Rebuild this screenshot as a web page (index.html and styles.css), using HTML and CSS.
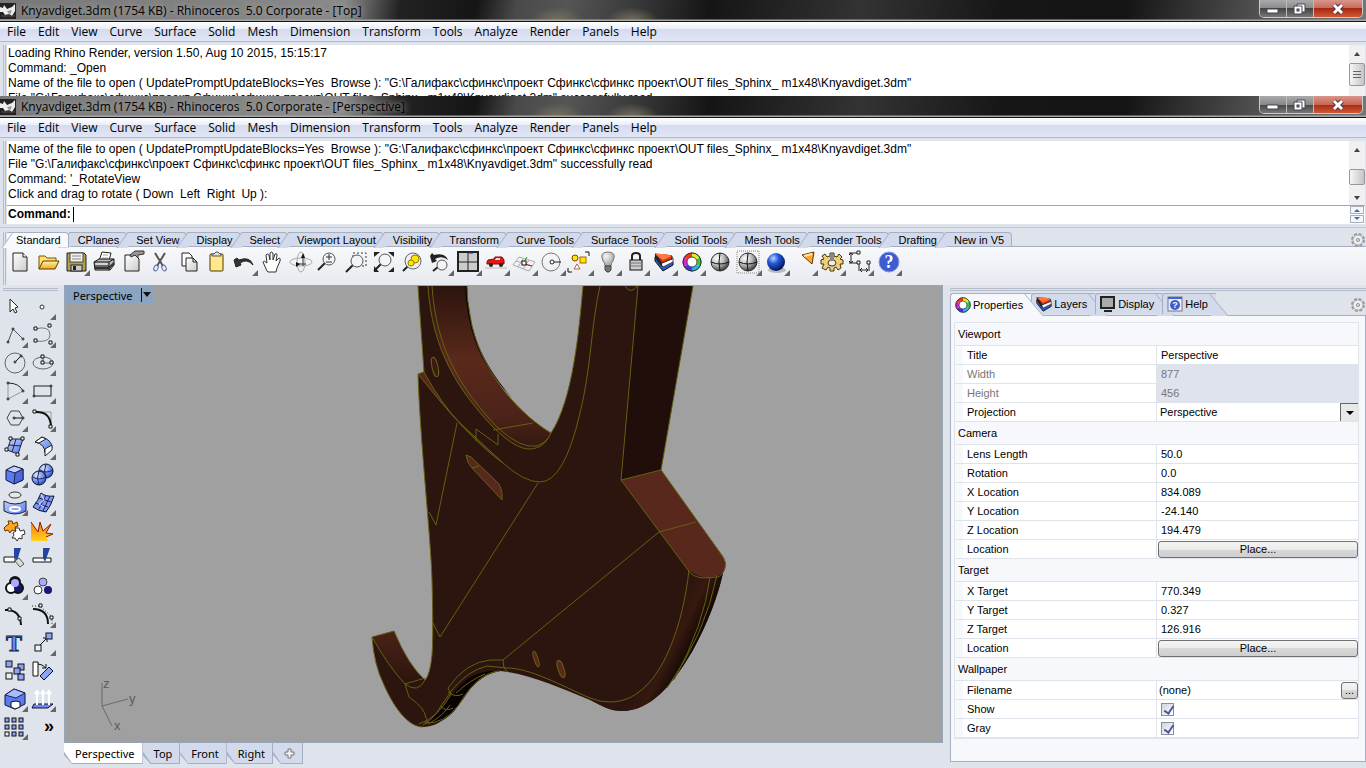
FILE: index.html
```
<!DOCTYPE html>
<html lang="en">
<head>
    <meta charset="utf-8">
    <title>Knyavdiget.3dm - Rhinoceros</title>
    <meta name="viewport" content="width=device-width, initial-scale=1.0">
    <link rel="stylesheet" href="styles.css">
</head>
<body>
    <!-- shared gradients and symbols -->
    <svg class="defs" width="0" height="0">
        <defs>
            <linearGradient id="paper" x1="0" y1="0" x2="1" y2="1"><stop offset="0" stop-color="#fff"/><stop offset="1" stop-color="#ccc"/></linearGradient>
            <linearGradient id="gold" x1="0" y1="0" x2="0" y2="1"><stop offset="0" stop-color="#fff3a8"/><stop offset="1" stop-color="#f0a820"/></linearGradient>
            <linearGradient id="blue" x1="0" y1="0" x2="1" y2="1"><stop offset="0" stop-color="#c4d4ff"/><stop offset="1" stop-color="#5578ee"/></linearGradient>
            <linearGradient id="fire" x1="0" y1="0" x2="0" y2="1"><stop offset="0" stop-color="#ff7a10"/><stop offset="1" stop-color="#ffd020"/></linearGradient>
            <radialGradient id="grayBall" cx=".35" cy=".3" r=".75"><stop offset="0" stop-color="#fff"/><stop offset=".5" stop-color="#bbb"/><stop offset="1" stop-color="#333"/></radialGradient>
            <radialGradient id="bulb" cx=".35" cy=".3" r=".8"><stop offset="0" stop-color="#f4f4f4"/><stop offset="1" stop-color="#999"/></radialGradient>
            <radialGradient id="blueBall" cx=".35" cy=".3" r=".75"><stop offset="0" stop-color="#b8d4ff"/><stop offset=".4" stop-color="#2458d8"/><stop offset="1" stop-color="#001050"/></radialGradient>
            <radialGradient id="softBall" cx=".35" cy=".3" r=".75"><stop offset="0" stop-color="#e4ecff"/><stop offset=".6" stop-color="#6a8cf4"/><stop offset="1" stop-color="#2848b8"/></radialGradient>
            <symbol id="wheel" viewBox="0 0 20 20">
                <circle cx="10" cy="10" r="9" fill="#fff" stroke="#333"/>
                <g fill="none" stroke-width="4">
                    <path d="M10 3A7 7 0 0 1 16 6.500" stroke="#e0f020"/>
                    <path d="M16 6.500A7 7 0 0 1 16 13.500" stroke="#30d030"/>
                    <path d="M16 13.500A7 7 0 0 1 10 17" stroke="#20b8e8"/>
                    <path d="M10 17A7 7 0 0 1 4 13.500" stroke="#3838e8"/>
                    <path d="M4 13.500A7 7 0 0 1 4 6.500" stroke="#e020d0"/>
                    <path d="M4 6.500A7 7 0 0 1 10 3" stroke="#f03818"/>
                </g>
                <circle cx="10" cy="10" r="9" fill="none" stroke="#333"/>
                <circle cx="10" cy="10" r="5" fill="#fff" stroke="#444"/>
            </symbol>
            <symbol id="layers" viewBox="0 0 20 20">
                <path d="M1 5V9L9 19L19 13V10Z" fill="#2858c8" stroke="#111"/>
                <path d="M1 4L9 15L19 10V6L9 10Z" fill="#fff" stroke="#444"/>
                <path d="M1 2L8 11L18 7V4L12 3Z" fill="#e83010" stroke="#222"/>
                <path d="M1 2L12 2L18 4L9 8Z" fill="#ff7840"/>
                <path d="M1 2V6L8 15V11Z" fill="#222"/>
            </symbol>
            <symbol id="cog" viewBox="0 0 16 16">
                <circle cx="8" cy="8" r="6" fill="none" stroke="#999" stroke-width="2" stroke-dasharray="3 1.700"/>
                <circle cx="8" cy="8" r="5" fill="#eceef2" stroke="#aaa"/>
                <circle cx="8" cy="8" r="1.500" fill="none" stroke="#888"/>
            </symbol>
            <symbol id="rhino" viewBox="0 0 16 16">
                <rect width="16" height="16" fill="#222"/>
                <path d="M0 4L3 5L4 2L7 6L12 4L15 1V8L12 13L9 11L5 12L3 9H0Z" fill="#eee"/>
                <path d="M7 8L12 7L10 12Z" fill="#999"/>
                <path d="M1 13H15" stroke="#555"/>
            </symbol>
            <symbol id="mag" viewBox="0 0 28 28">
                <path d="M4 22L11 15" stroke="#222" stroke-width="2"/>
                <circle cx="15" cy="11" r="6" fill="#f4f4f6" stroke="#555"/>
            </symbol>
        </defs>
    </svg>

    <div class="window back-window">
        <div class="titlebar">
            <svg class="app-icon"><use href="#rhino"/></svg>
            <span class="title-text">Knyavdiget.3dm (1754 KB) - Rhinoceros  5.0 Corporate - [Top]</span>
            <div class="win-buttons">
                <button aria-label="Minimize"><svg width="14" height="12"><rect x="1" y="6" width="11" height="4" fill="#fff" stroke="#445"/></svg></button>
                <button aria-label="Restore"><svg width="14" height="12"><path d="M4 1H12V9H4Z" fill="#fff" stroke="#445"/><path d="M1 3H9V11H1Z" fill="#fff" stroke="#445"/><rect x="4" y="6" width="2" height="2" fill="#667" stroke="#445"/></svg></button>
                <button class="close" aria-label="Close"><svg width="14" height="12"><path d="M3 2L11 10M11 2L3 10" stroke="#534" stroke-width="5"/><path d="M3 2L11 10M11 2L3 10" stroke="#fff" stroke-width="3"/></svg></button>
            </div>
        </div>
        <nav class="menubar">
            <a href="#">File</a><a href="#">Edit</a><a href="#">View</a><a href="#">Curve</a><a href="#">Surface</a><a href="#">Solid</a><a href="#">Mesh</a><a href="#">Dimension</a><a href="#">Transform</a><a href="#">Tools</a><a href="#">Analyze</a><a href="#">Render</a><a href="#">Panels</a><a href="#">Help</a>
        </nav>
        <div class="console">
            <div class="grip"></div>
            <div class="console-text">
                <p>Loading Rhino Render, version 1.50, Aug 10 2015, 15:15:17</p>
                <p>Command: _Open</p>
                <p>Name of the file to open ( UpdatePromptUpdateBlocks=Yes  Browse ): "G:\Галифакс\сфинкс\проект Сфинкс\сфинкс проект\OUT files_Sphinx_ m1x48\Knyavdiget.3dm"</p>
                <p>File "G:\Галифакс\сфинкс\проект Сфинкс\сфинкс проект\OUT files_Sphinx_ m1x48\Knyavdiget.3dm" successfully read</p>
            </div>
            <div class="scrollbar">
                <svg width="16" height="18"><path d="M5 11L8 7L11 11Z" fill="#444"/></svg>
                <div class="thumb tall"><svg width="8" height="10"><path d="M0 1.500H8M0 4.500H8M0 7.500H8" stroke="#666"/></svg></div>
            </div>
        </div>
    </div>

    <div class="window main-window">
        <div class="titlebar">
            <svg class="app-icon"><use href="#rhino"/></svg>
            <span class="title-text">Knyavdiget.3dm (1754 KB) - Rhinoceros  5.0 Corporate - [Perspective]</span>
            <div class="win-buttons">
                <button aria-label="Minimize"><svg width="14" height="12"><rect x="1" y="6" width="11" height="4" fill="#fff" stroke="#445"/></svg></button>
                <button aria-label="Restore"><svg width="14" height="12"><path d="M4 1H12V9H4Z" fill="#fff" stroke="#445"/><path d="M1 3H9V11H1Z" fill="#fff" stroke="#445"/><rect x="4" y="6" width="2" height="2" fill="#667" stroke="#445"/></svg></button>
                <button class="close" aria-label="Close"><svg width="14" height="12"><path d="M3 2L11 10M11 2L3 10" stroke="#534" stroke-width="5"/><path d="M3 2L11 10M11 2L3 10" stroke="#fff" stroke-width="3"/></svg></button>
            </div>
        </div>
        <nav class="menubar">
            <a href="#">File</a><a href="#">Edit</a><a href="#">View</a><a href="#">Curve</a><a href="#">Surface</a><a href="#">Solid</a><a href="#">Mesh</a><a href="#">Dimension</a><a href="#">Transform</a><a href="#">Tools</a><a href="#">Analyze</a><a href="#">Render</a><a href="#">Panels</a><a href="#">Help</a>
        </nav>
        <div class="console">
            <div class="grip"></div>
            <div class="console-main">
                <div class="console-history">
                    <div class="console-text">
                        <p>Name of the file to open ( UpdatePromptUpdateBlocks=Yes  Browse ): "G:\Галифакс\сфинкс\проект Сфинкс\сфинкс проект\OUT files_Sphinx_ m1x48\Knyavdiget.3dm"</p>
                        <p>File "G:\Галифакс\сфинкс\проект Сфинкс\сфинкс проект\OUT files_Sphinx_ m1x48\Knyavdiget.3dm" successfully read</p>
                        <p>Command: '_RotateView</p>
                        <p>Click and drag to rotate ( Down  Left  Right  Up ):</p>
                    </div>
                    <div class="scrollbar">
                        <svg width="16" height="18"><path d="M5 11L8 7L11 11Z" fill="#444"/></svg>
                        <span class="track"></span>
                        <div class="thumb"></div>
                        <svg width="16" height="20"><path d="M5 11L8 15L11 11Z" fill="#444"/></svg>
                    </div>
                </div>
                <div class="command-line">
                    <label for="command">Command:</label>
                    <span class="caret"></span>
                    <input id="command" type="text">
                    <div class="spin">
                        <button aria-label="Previous"><svg width="8" height="4"><path d="M1 4L4 1L7 4Z" fill="#46b"/></svg></button>
                        <button aria-label="Next"><svg width="8" height="4"><path d="M1 0L4 3L7 0Z" fill="#46b"/></svg></button>
                    </div>
                </div>
            </div>
        </div>

        <div class="toolbar">
            <div class="grip"></div>
            <div class="toolbar-main">
                <div class="tabs">
                    <button class="tab active">Standard</button><button class="tab">CPlanes</button><button class="tab">Set View</button><button class="tab">Display</button><button class="tab">Select</button><button class="tab">Viewport Layout</button><button class="tab">Visibility</button><button class="tab">Transform</button><button class="tab">Curve Tools</button><button class="tab">Surface Tools</button><button class="tab">Solid Tools</button><button class="tab">Mesh Tools</button><button class="tab">Render Tools</button><button class="tab">Drafting</button><button class="tab">New in V5</button>
                    <svg class="cog"><use href="#cog"/></svg>
                </div>
                <div class="icons">
                    <button class="tool" aria-label="New"><svg><path d="M7 5H17L21 9V23H7Z" fill="url(#paper)" stroke="#222"/><path d="M17 5V9H21" fill="#fff" stroke="#222"/></svg></button>
                    <button class="tool" aria-label="Open"><svg><path d="M5 21V8H11L13 10H22V13" fill="#ffe070" stroke="#7a5200"/><path d="M5 21L9 13H25L21 21Z" fill="url(#gold)" stroke="#5a3c00"/></svg></button>
                    <button class="tool fly" aria-label="Save"><svg><path d="M5 5H22L24 7V23H5Z" fill="#b0a050" stroke="#222"/><rect x="8" y="5" width="13" height="9" fill="#f2f2f2" stroke="#444"/><path d="M10 8H19M10 11H19" stroke="#888"/><rect x="9" y="17" width="11" height="6" fill="#ccc" stroke="#222"/><rect x="11" y="18" width="3" height="4" fill="#222"/></svg></button>
                    <button class="tool" aria-label="Print"><svg><path d="M9 13L12 4L21 5L19 13" fill="#fff" stroke="#222"/><path d="M13 7H18M12 10H18" stroke="#aaa"/><path d="M4 14L9 11H24V17L20 22H5Z" fill="#bbb" stroke="#111"/><path d="M4 14H19V22M19 14L24 11M5 18H19" fill="none" stroke="#111"/><path d="M5 20H19L24 15" fill="none" stroke="#333" stroke-width="2"/><path d="M6 16H17" stroke="#eee"/></svg></button>
                    <button class="tool" aria-label="Document properties"><svg><path d="M7 7H17L21 11V23H7Z" fill="url(#paper)" stroke="#222"/><path d="M12 7L17 3H26V6L20 7V10L17 7L13 9Z" fill="#999" stroke="#333"/></svg></button>
                    <button class="tool" aria-label="Cut"><svg><path d="M9 5L17 18M19 5L11 18" stroke="#555" stroke-width="2"/><ellipse cx="10" cy="20" rx="2" ry="3" fill="none" stroke="#5868a8" transform="rotate(25 10 20)"/><ellipse cx="18" cy="20" rx="2" ry="3" fill="none" stroke="#5868a8" transform="rotate(-25 18 20)"/></svg></button>
                    <button class="tool" aria-label="Copy"><svg><path d="M8 5H15L18 8V18H8Z" fill="#fff" stroke="#222"/><path d="M12 10H19L23 14V23H12Z" fill="url(#paper)" stroke="#222"/><path d="M19 10V14H23" fill="none" stroke="#222"/></svg></button>
                    <button class="tool" aria-label="Paste"><svg><rect x="8" y="6" width="13" height="17" rx="1" fill="#ffe88a" stroke="#4a3a00"/><path d="M10 8V6H12L14 4H16L18 6H19V8Z" fill="#ddd" stroke="#555"/></svg></button>
                    <button class="tool fly" aria-label="Undo"><svg><path d="M4 12L6 19L11 17L10 15Q17 10 23 17Q20 8 9 12L7 10Z" fill="#333" stroke="#222"/></svg></button>
                    <button class="tool" aria-label="Pan"><svg><path d="M9 23L5 14Q6 12 9 15L8 7Q9 5 11 7L12 12L12 5Q13 3 15 5V12L17 6Q19 5 19 7L18 13L21 10Q23 10 22 13L19 20L18 24H10Z" fill="#fff" stroke="#333"/></svg></button>
                    <button class="tool" aria-label="Rotate view"><svg fill="none"><ellipse cx="15" cy="14" rx="11" ry="4" stroke="#aaa"/><ellipse cx="15" cy="14" rx="4" ry="10" stroke="#aaa"/><path d="M17 8V18M11 16H20" stroke="#333"/><path d="M15 10L17 5L19 10ZM10 14L14 16L10 19Z" fill="#111"/></svg></button>
                    <button class="tool" aria-label="Zoom dynamic"><svg><use href="#mag"/><path d="M12 9H18M15 6V12M12 14H18" stroke="#333"/></svg></button>
                    <button class="tool" aria-label="Zoom window"><svg><rect x="11" y="5" width="13" height="13" fill="none" stroke="#333" stroke-dasharray="2 2"/><use href="#mag" y="2"/></svg></button>
                    <button class="tool" aria-label="Zoom extents"><svg><use href="#mag" y="1"/><path d="M4 4H10L4 9ZM24 4V9L18 4ZM4 24V18L9 24ZM24 24H18L24 19Z" fill="#222"/></svg></button>
                    <button class="tool" aria-label="Zoom selected"><svg><path d="M5 23L10 18" stroke="#222" stroke-width="2"/><circle cx="15" cy="13" r="8" fill="#eee" stroke="#666"/><circle cx="17" cy="11" r="4" fill="#ffe800" stroke="#997700"/><circle cx="13" cy="15" r="3" fill="#ffe800" stroke="#997700"/></svg></button>
                    <button class="tool fly" aria-label="Undo view"><svg><path d="M7 23L12 19" stroke="#222" stroke-width="2"/><circle cx="16" cy="17" r="5" fill="#f4f4f6" stroke="#555"/><path d="M4 8L6 15L11 13L9 11Q16 7 22 12Q19 4 8 7L6 5Z" fill="#222"/></svg></button>
                    <button class="tool fly" aria-label="Four views"><svg><path d="M4 4H24V23H4Z" fill="#ccc" stroke="#222" stroke-width="2"/><path d="M14 4V23M4 14H24" stroke="#222"/><path d="M15 5H19" stroke="#23a"/></svg></button>
                    <button class="tool fly" aria-label="Right view"><svg><path d="M5 14L6 12L12 11L13 9H20L22 12V16H5Z" fill="#e01818" stroke="#900"/><path d="M14 10H18V12H13Z" fill="#ddd"/><circle cx="9" cy="17" r="2" fill="#222"/><circle cx="19" cy="17" r="2" fill="#222"/><path d="M3 20H25" stroke="#bbb"/></svg></button>
                    <button class="tool fly" aria-label="Set CPlane"><svg fill="none"><path d="M9 9L25 14L19 23L3 17ZM6 13L22 18M13 11L8 19M19 12L13 21" stroke="#aaa"/><path d="M14 14L17 9" stroke="#0a0"/><path d="M14 16L22 18" stroke="#c00"/><rect x="12" y="13" width="4" height="4" fill="#fff" stroke="#111"/></svg></button>
                    <button class="tool fly" aria-label="Object snap"><svg><circle cx="13" cy="14" r="9" fill="none" stroke="#777"/><path d="M15 14H23" stroke="#222"/><circle cx="14" cy="14" r="2" fill="#fff" stroke="#222"/></svg></button>
                    <button class="tool fly" aria-label="Select"><svg><path d="M19 4H23V8M2 20V24H6" fill="none" stroke="#111"/><circle cx="9" cy="10" r="3" fill="#ffe800" stroke="#840"/><rect x="14" y="9" width="6" height="6" fill="#ffe800" stroke="#a60"/><path d="M8 21L11 16L14 21Z" fill="#fff" stroke="#a64"/></svg></button>
                    <button class="tool fly" aria-label="Hide"><svg><path d="M11 18Q11 15 9 13Q5 4 14 4Q23 4 19 13Q17 15 17 18Z" fill="url(#bulb)" stroke="#777"/><path d="M11 18H17V22L15 24H13L11 22Z" fill="#777" stroke="#444"/></svg></button>
                    <button class="tool fly" aria-label="Lock"><svg><path d="M10 13V8Q10 5 14 5Q18 5 18 8V13" fill="none" stroke="#222" stroke-width="2"/><rect x="8" y="12" width="12" height="10" fill="#ccc" stroke="#111"/><path d="M9 15H19M9 18H19" stroke="#777"/></svg></button>
                    <button class="tool fly" aria-label="Layers"><svg><use href="#layers" x="4" y="4" width="20" height="20"/></svg></button>
                    <button class="tool fly" aria-label="Object properties"><svg><use href="#wheel" x="4" y="4" width="20" height="20"/></svg></button>
                    <button class="tool" aria-label="Shade"><svg><circle cx="14" cy="14" r="9" fill="url(#grayBall)" stroke="#333"/><path d="M5 14Q14 18 23 14M14 5Q12 14 14 23" fill="none" stroke="#111"/></svg></button>
                    <button class="tool fly" aria-label="Shade all"><svg><rect x="3" y="3" width="22" height="22" fill="none" stroke="#bbb" stroke-width="2" stroke-dasharray="1 1"/><circle cx="14" cy="14" r="9" fill="url(#grayBall)" stroke="#333"/><path d="M5 14Q14 18 23 14M14 5Q12 14 14 23" fill="none" stroke="#111"/></svg></button>
                    <button class="tool fly" aria-label="Render"><svg><ellipse cx="15" cy="22" rx="9" ry="3" fill="#bbb"/><circle cx="14" cy="14" r="9" fill="url(#blueBall)"/></svg></button>
                    <button class="tool fly" aria-label="Spotlight"><svg><path d="M12 7L24 4L22 16Z" fill="#ffa830" stroke="#630"/><path d="M14 8L22 6" stroke="#ffe8a0" stroke-width="2"/></svg></button>
                    <button class="tool fly" aria-label="Options"><svg><path d="M12 5H16V8L19 9L21 6L24 9L22 11L25 12V16L22 16L23 20L20 22L18 19L16 20V23H12V20L10 19L8 22L4 20L6 16L3 16V12L6 11L4 8L7 6L9 9L12 8Z" fill="#ecd080" stroke="#4a3400"/><ellipse cx="14" cy="15" rx="4" ry="3" fill="#eee" stroke="#4a3400"/><rect x="12" y="6" width="4" height="7" fill="#888"/></svg></button>
                    <button class="tool fly" aria-label="Dimensions"><svg fill="none" stroke="#222"><path d="M5 5V15M3 5H12M3 15H12M13 16V23M23 16V23M14 22H22M3 7L5 5L7 7M3 13L5 15L7 13M16 20L14 22L16 24M20 20L22 22L20 24"/><path d="M11 3H14V6H11ZM11 13H14V16H11ZM21 13H24V16H21Z" fill="#fff"/></svg></button>
                    <button class="tool fly" aria-label="Help"><svg><circle cx="15" cy="14" r="10" fill="#3c5cd0" stroke="#8898e0"/><text x="15" y="20" class="help-mark">?</text></svg></button>
                </div>
            </div>
        </div>

        <div class="workspace">
            <div class="side-tools">
                <div class="h-grip"></div>
                <div class="tool-grid">
                    <button class="tool" aria-label="Pointer"><svg><path d="M10 7V20L13 17L15 21L17 20L15 16L18 15Z" fill="#fff" stroke="#222"/></svg></button>
                    <button class="tool fly" aria-label="Point"><svg><circle cx="14" cy="15" r="2" fill="#fff" stroke="#333"/></svg></button>
                    <button class="tool fly" aria-label="Polyline"><svg><path d="M8 22L13 9L23 19" fill="none" stroke="#555"/><g fill="#fff" stroke="#111"><circle cx="8" cy="22" r="1"/><circle cx="13" cy="9" r="1"/><circle cx="23" cy="19" r="1"/></g></svg></button>
                    <button class="tool fly" aria-label="Curve"><svg><path d="M7 9Q22 5 22 15Q22 23 7 21" fill="none" stroke="#777"/><path d="M6 7H9V10H6ZM20 4H23V7H20ZM6 19H9V22H6ZM21 21H24V24H21Z" fill="#fff" stroke="#111"/></svg></button>
                    <button class="tool fly" aria-label="Circle"><svg><circle cx="15" cy="15" r="10" fill="none" stroke="#666"/><path d="M15 14L21 8" stroke="#111"/><g fill="#fff" stroke="#111"><circle cx="15" cy="14" r="1"/><circle cx="21" cy="8" r="1"/></g></svg></button>
                    <button class="tool fly" aria-label="Ellipse"><svg><ellipse cx="15" cy="15" rx="10" ry="6" fill="none" stroke="#666"/><path d="M15 15V9M15 15H24" stroke="#666"/><path d="M13 7H16V10H13ZM13 13H16V16H13ZM22 13H25V16H22Z" fill="#fff" stroke="#111"/></svg></button>
                    <button class="tool fly" aria-label="Arc"><svg><path d="M8 7V23L23 15" fill="none" stroke="#999"/><path d="M8 7Q19 7 23 15" fill="none" stroke="#222"/><g fill="#fff" stroke="#111"><circle cx="8" cy="7" r="1"/><circle cx="8" cy="23" r="1"/><circle cx="23" cy="15" r="1"/></g></svg></button>
                    <button class="tool fly" aria-label="Rectangle"><svg><rect x="6" y="10" width="17" height="10" fill="none" stroke="#222"/><circle cx="6" cy="20" r="1" fill="#fff" stroke="#111"/><circle cx="23" cy="10" r="1" fill="#fff" stroke="#111"/></svg></button>
                    <button class="tool fly" aria-label="Polygon"><svg><path d="M7 14L11 7H19L23 14L19 21H11Z" fill="none" stroke="#444"/><path d="M14 14H22" stroke="#111"/><circle cx="14" cy="14" r="1" fill="#fff" stroke="#111"/><circle cx="23" cy="14" r="1" fill="#fff" stroke="#111"/></svg></button>
                    <button class="tool fly" aria-label="Fillet"><svg><path d="M9 8H23V20" fill="none" stroke="#999"/><path d="M7 8Q22 7 23 22" fill="none" stroke="#111" stroke-width="2"/><path d="M5 6H8V9H5ZM21 21H24V24H21Z" fill="#fff" stroke="#111"/></svg></button>
                    <button class="tool fly" aria-label="Surface"><svg><path d="M11 7H23L18 22L7 18Z" fill="url(#blue)" stroke="#223"/><path d="M16 7L12 20M9 13L21 14" stroke="#223"/><path d="M9 5H12V8H9ZM21 5H24V8H21ZM5 16H8V19H5ZM16 21H19V24H16Z" fill="#fff" stroke="#111"/></svg></button>
                    <button class="tool fly" aria-label="Sweep"><svg><path d="M7 10L14 5Q24 8 24 16L17 21Q17 12 7 10Z" fill="url(#blue)" stroke="#222"/><path d="M7 10L14 5L18 7L11 11ZM17 17L24 13V18L17 24Z" fill="#fff" stroke="#222"/></svg></button>
                    <button class="tool fly" aria-label="Box"><svg><path d="M6 10L14 6L23 9V20L14 24L6 20Z" fill="#5a7cf2" stroke="#113"/><path d="M6 10L14 6L23 9L15 13Z" fill="#c0d0ff" stroke="#225"/><path d="M15 13L23 9V20L14 24Z" fill="#4a68d8" stroke="#225"/></svg></button>
                    <button class="tool fly" aria-label="Boolean"><svg><g fill="url(#softBall)" stroke="#113"><circle cx="18" cy="11" r="7"/><circle cx="11" cy="18" r="7"/></g><path d="M12 10Q18 14 25 10M5 17Q11 21 18 17M18 4Q15 11 18 18M11 11Q8 18 11 25" fill="none" stroke="#224"/></svg></button>
                    <button class="tool fly" aria-label="Split"><svg><ellipse cx="15" cy="7" rx="6" ry="3" fill="#e8e8e8" stroke="#333"/><path d="M4 13Q15 19 26 13V23Q15 29 4 23Z" fill="url(#blue)" stroke="#223"/><ellipse cx="15" cy="21" rx="5" ry="2" fill="none" stroke="#fff" stroke-width="2"/></svg></button>
                    <button class="tool fly" aria-label="Patch"><svg><path d="M13 5Q18 9 26 8Q23 18 18 24Q10 23 5 19Q10 13 13 5Z" fill="#7c98f4" stroke="#113"/><path d="M11 10L23 14M7 15L20 19M18 7L11 21M22 8L15 23" stroke="#225"/><path d="M13 6L16 12L11 16L16 19" fill="none" stroke="#dfe8ff"/></svg></button>
                    <button class="tool" aria-label="Explode"><svg><path d="M6 10L9 8L8 5L12 5L13 8L17 6L18 10L15 11L16 15L12 14L10 17L8 14L5 15L4 12Z" fill="#ffa820" stroke="#643800"/><path d="M13 17L16 15L15 12L19 12L20 15L24 14L25 18L22 19L22 23L19 22L17 25L15 22L12 22L14 19Z" fill="#fff" stroke="#333"/></svg></button>
                    <button class="tool" aria-label="Burst"><svg><path d="M3 25V6L10 16L12 6L15 15L23 8L18 17L25 18L18 21L20 25Z" fill="url(#fire)"/><path d="M3 6L10 16L12 6L15 15L23 8L18 17L25 18L18 21" fill="none" stroke="#842000"/></svg></button>
                    <button class="tool" aria-label="Trim"><svg><path d="M4 13H15V18H4Z" fill="#fff" stroke="#111"/><path d="M14 4H21L17 17L14 13Z" fill="#2545a0"/><path d="M15 17L19 14L24 20L20 23Z" fill="#ddd" stroke="#555"/></svg></button>
                    <button class="tool" aria-label="Split line"><svg><path d="M5 14H23V18H5Z" fill="#fff" stroke="#111"/><path d="M15 4H22L17 18L15 14Z" fill="#2545a0"/></svg></button>
                    <button class="tool fly" aria-label="Group"><svg><g stroke="#111" stroke-width="4"><circle cx="15" cy="10" r="4"/><circle cx="11" cy="16" r="4"/><circle cx="18" cy="16" r="4"/></g><circle cx="11" cy="16" r="4" fill="#fff"/><circle cx="18" cy="16" r="4" fill="#181868"/><circle cx="15" cy="11" r="4" fill="#aaaaff"/></svg></button>
                    <button class="tool" aria-label="Ungroup"><svg><circle cx="15" cy="10" r="4" fill="#aaaaff" stroke="#444"/><circle cx="10" cy="18" r="4" fill="#fff" stroke="#333"/><circle cx="20" cy="18" r="4" fill="#181878"/></svg></button>
                    <button class="tool" aria-label="Edit points"><svg><path d="M5 10Q20 9 21 25" fill="none" stroke="#111" stroke-width="2"/><path d="M8 8H11V11H8ZM18 17H21V20H18Z" fill="#fff" stroke="#111"/></svg></button>
                    <button class="tool fly" aria-label="Control points"><svg><path d="M5 9Q20 9 20 24" fill="none" stroke="#111" stroke-width="2"/><path d="M4 6H12L24 17V25" fill="none" stroke="#222" stroke-dasharray="1 2"/><path d="M11 4H14V7H11ZM22 16H25V19H22Z" fill="#fff" stroke="#111"/></svg></button>
                    <button class="tool" aria-label="Text"><svg><text x="14" y="23" class="text-mark">T</text></svg></button>
                    <button class="tool fly" aria-label="Move"><svg><path d="M12 17L19 10M15 10H19V14" fill="none" stroke="#111"/><rect x="18" y="5" width="6" height="6" fill="#8ca4f8" stroke="#111"/><rect x="7" y="17" width="6" height="6" fill="#eee" stroke="#111"/></svg></button>
                    <button class="tool" aria-label="Copy objects"><svg><g fill="#8ca4f8" stroke="#111"><rect x="6" y="5" width="6" height="6"/><rect x="18" y="8" width="6" height="6"/><rect x="14" y="12" width="6" height="6"/><rect x="18" y="18" width="6" height="6"/><rect x="6" y="17" width="6" height="6" fill="#eee"/></g></svg></button>
                    <button class="tool" aria-label="Rotate"><svg><path d="M5 6H10V20H5Z" fill="#fff" stroke="#111"/><path d="M10 8Q14 8 18 12M14 12H18V8" fill="none" stroke="#111"/><path d="M12 20L21 11L25 15L16 24Z" fill="#8ca4f8" stroke="#111"/></svg></button>
                    <button class="tool fly" aria-label="Solid edit"><svg><path d="M5 11L14 5L25 9V20L15 25L5 21Z" fill="#5a7cf2" stroke="#113"/><path d="M5 11L14 5L25 9L16 14Z" fill="#a8bcfc" stroke="#225"/><path d="M11 18L16 17L20 18V23L15 25L11 23Z" fill="#fff" stroke="#111"/></svg></button>
                    <button class="tool fly" aria-label="Extrude"><svg><path d="M6 20H25L20 24H4Z" fill="#6c8cf4" stroke="#113"/><path d="M9 21V7M15 21V7M21 21V7M7 10L9 7L11 10M13 10L15 7L17 10M19 10L21 7L23 10" fill="none" stroke="#fff" stroke-width="2"/></svg></button>
                    <button class="tool fly" aria-label="Array"><svg><g fill="#8ca4f8" stroke="#111"><rect x="5" y="6" width="4" height="4"/><rect x="12" y="6" width="4" height="4"/><rect x="19" y="6" width="4" height="4"/><rect x="5" y="13" width="4" height="4"/><rect x="12" y="13" width="4" height="4"/><rect x="19" y="13" width="4" height="4"/><rect x="5" y="20" width="4" height="4" fill="#eee"/><rect x="12" y="20" width="4" height="4"/><rect x="19" y="20" width="4" height="4"/></g></svg></button>
                    <button class="tool more" aria-label="More tools">»</button>
                </div>
            </div>

            <div class="view-column">
                <div class="viewport">
                    <svg class="scene" viewBox="65 286 877 456" preserveAspectRatio="xMinYMin meet">
                        <defs>
                            <linearGradient id="ring" x1="0" y1="0" x2="0" y2="1"><stop offset="0" stop-color="#2c140e"/><stop offset=".45" stop-color="#5a291b"/><stop offset=".8" stop-color="#4c2318"/><stop offset="1" stop-color="#32170f"/></linearGradient>
                            <linearGradient id="hook" x1="0" y1="0" x2="0" y2="1"><stop offset="0" stop-color="#4a2217"/><stop offset="1" stop-color="#2b150e"/></linearGradient>
                            <linearGradient id="rim" gradientUnits="userSpaceOnUse" x1="668" y1="622" x2="704" y2="640"><stop offset="0" stop-color="#2b150e"/><stop offset=".4" stop-color="#36190f"/><stop offset="1" stop-color="#050201"/></linearGradient>
                        </defs>
                        <path class="body" d="M418 286L424 372L418 374C420 440 431 540 432 580C433 620 433 640 432 655Q430 675 425 680Q408 665 394 631L372 637Q374 665 384 685C396 712 410 727 423 727C440 727 455 712 466 695C478 678 488 671 500 671C530 674 560 688 590 700C605 708 612 711 622 711C650 711 672 686 693 650C708 622 718 596 723 573L725 565Q726 560 722 555L661 470L693 286H583C579 330 573 400 551 433C520 415 478 370 470 315Q467 300 467 286Z"/>
                        <path d="M428 286C432 350 458 390 493 427Q520 454 536 448Q546 445 551 433C520 415 478 370 470 315Q467 300 467 286Z" fill="url(#ring)"/>
                        <path d="M467 286Q467 300 470 315C476 350 492 374 512 398C484 368 468 340 465 286Z" fill="#0d0604"/>
                        <path class="side" d="M638 286H693L661 470L621 480Z"/>
                        <path class="light" d="M621 480L661 470L723 557Q727 563 725 568Q723 575 718 577L703 578Q692 577 688 570Z"/>
                        <path d="M689 570C683 625 660 702 610 702Q600 702 590 698Q606 711 622 711C650 711 672 686 693 650C708 622 718 596 723 573Q705 583 689 570Z" fill="url(#rim)"/>
                        <path class="light" d="M418 374L424 372Q442 405 460 423L503 463Q470 440 418 374Z"/>
                        <path d="M372 637L394 631Q408 665 425 680L405 684Q388 666 372 637Z" fill="url(#hook)"/>
                        <path class="light" d="M466 455L471 457L498 483Q503 489 502 500L472 468Q467 463 466 455Z"/>
                        <path d="M490 671C465 674 458 688 441 709Q433 719 426 723Q446 724 458 706Q476 675 500 671Z" fill="#080302"/>
                        <g class="edge">
                            <path d="M418 286L424 372L418 374C420 440 431 540 432 580C433 620 433 640 432 655Q430 675 425 680Q408 665 394 631L372 637Q374 665 384 685C396 712 410 727 423 727M425 723Q444 724 458 706Q478 672 500 671M467 286Q467 300 470 315C478 370 520 415 551 433C573 400 579 330 583 286M693 286L661 470L723 557Q727 563 725 568Q723 575 718 577L703 578Q692 577 688 570L621 480L638 286M621 480L661 470"/>
                            <path d="M428 286C432 350 458 390 493 427Q520 454 536 448Q546 445 551 433M432 286C436 350 462 390 497 427Q521 449 536 446Q544 444 549 437"/>
                            <path d="M600 286C591 325 591 370 580 413Q564 482 540 482Q524 482 503 463L460 423Q442 405 424 372M418 374Q470 440 503 463M493 430L533 423"/>
                            <path d="M476 441V429L498 445V434M457 423L436 525L429 512M538 483L440 637L433 623M659 532L696 522M659 532L503 660L504 668L508 672"/>
                            <path d="M689 570C683 625 660 702 610 702Q600 702 590 698C560 685 530 668 507 668L487 666Q467 671 452 690L441 706Q433 720 423 725M503 660H490Q466 662 448 688L451 694Q438 718 419 724M710 577Q704 625 674 680M717 575Q705 635 667 688"/>
                            <path d="M448 692Q455 698 463 694M440 706Q446 712 453 708M425 723L427 720M456 693Q470 680 485 674M372 637Q388 666 405 684L425 678M405 684Q418 694 425 680M405 684L409 697Q425 708 426 718L429 723M428 724Q443 716 450 705"/>
                            <ellipse cx="435" cy="367" rx="3" ry="10" transform="rotate(-12 435 367)" fill="#3b1b12"/>
                            <ellipse cx="536" cy="659" rx="2" ry="8" transform="rotate(-18 536 659)" fill="#57281b"/>
                            <ellipse cx="561" cy="669" rx="3" ry="9" transform="rotate(-18 561 669)" fill="#57281b"/>
                            <path d="M466 455L471 457L498 483Q503 489 502 500L472 468Q467 463 466 455M472 468L479 466M625 286Q631 295 637 286"/>
                        </g>
                        <g class="axes">
                            <path d="M102 683V706L128 699M102 706L112 726"/>
                            <text x="103" y="688">z</text><text x="129" y="703">y</text><text x="114" y="730">x</text>
                        </g>
                    </svg>
                    <button class="view-label"><span>Perspective</span><svg width="10" height="16"><path d="M.5 1V15" stroke="#111"/><path d="M2 5H10L6 10Z" fill="#111"/></svg></button>
                </div>
                <div class="view-tabs">
                    <button class="active">Perspective</button><button>Top</button><button>Front</button><button>Right</button><button aria-label="Add viewport"><svg width="11" height="11"><path d="M4 1H7V4H10V7H7V10H4V7H1V4H4Z" fill="#eee" stroke="#777"/></svg></button>
                </div>
            </div>

            <div class="panel">
                <div class="h-grip"></div>
                <div class="panel-tabs">
                    <button class="active"><svg><use href="#wheel"/></svg>Properties</button>
                    <button><svg><use href="#layers"/></svg>Layers</button>
                    <button><svg viewBox="0 0 16 16"><rect x="1" y="1" width="13" height="11" fill="#aaa" stroke="#222" stroke-width="2"/><path d="M4 15H12" stroke="#222" stroke-width="2"/></svg>Display</button>
                    <button><svg viewBox="0 0 16 16"><rect x="1" y="1" width="14" height="14" fill="#e8eefc" stroke="#778"/><path d="M1 2H15" stroke="#46c" stroke-width="2"/><circle cx="8" cy="9" r="5" fill="#3c5cd0"/><text x="8" y="12" class="small-mark">?</text></svg>Help</button>
                    <svg class="cog"><use href="#cog"/></svg>
                </div>
                <div class="panel-body">
                    <table>
                        <colgroup><col class="gutter"><col class="names"><col></colgroup>
                        <tr class="group"><th colspan="3">Viewport</th></tr>
                        <tr><td></td><th><label for="title">Title</label></th><td><input id="title" type="text" value="Perspective"></td></tr>
                        <tr class="off"><td></td><th><label for="vw">Width</label></th><td><input id="vw" type="text" value="877" disabled></td></tr>
                        <tr class="off"><td></td><th><label for="vh">Height</label></th><td><input id="vh" type="text" value="456" disabled></td></tr>
                        <tr><td></td><th><label for="projection">Projection</label></th><td><div class="drop"><select id="projection"><option>Perspective</option><option>Parallel</option></select><span class="drop-arrow"><svg width="8" height="4"><path d="M0 0H8L4 4Z"/></svg></span></div></td></tr>
                        <tr class="group"><th colspan="3">Camera</th></tr>
                        <tr><td></td><th><label for="lens">Lens Length</label></th><td><input id="lens" type="text" value="50.0"></td></tr>
                        <tr><td></td><th><label for="rot">Rotation</label></th><td><input id="rot" type="text" value="0.0"></td></tr>
                        <tr><td></td><th><label for="xl">X Location</label></th><td><input id="xl" type="text" value="834.089"></td></tr>
                        <tr><td></td><th><label for="yl">Y Location</label></th><td><input id="yl" type="text" value="-24.140"></td></tr>
                        <tr><td></td><th><label for="zl">Z Location</label></th><td><input id="zl" type="text" value="194.479"></td></tr>
                        <tr><td></td><th>Location</th><td><button class="place">Place...</button></td></tr>
                        <tr class="group"><th colspan="3">Target</th></tr>
                        <tr><td></td><th><label for="xt">X Target</label></th><td><input id="xt" type="text" value="770.349"></td></tr>
                        <tr><td></td><th><label for="yt">Y Target</label></th><td><input id="yt" type="text" value="0.327"></td></tr>
                        <tr><td></td><th><label for="zt">Z Target</label></th><td><input id="zt" type="text" value="126.916"></td></tr>
                        <tr><td></td><th>Location</th><td><button class="place">Place...</button></td></tr>
                        <tr class="group"><th colspan="3">Wallpaper</th></tr>
                        <tr><td></td><th>Filename</th><td><div class="file">(none)<button class="browse">...</button></div></td></tr>
                        <tr><td></td><th><label for="show">Show</label></th><td><input id="show" type="checkbox" checked></td></tr>
                        <tr><td></td><th><label for="gray">Gray</label></th><td><input id="gray" type="checkbox" checked></td></tr>
                    </table>
                </div>
            </div>
        </div>
    </div>
</body>
</html>
```
FILE: styles.css
```
* {
    box-sizing: border-box;
}
body {
    margin: 0;
    height: 100vh;
    display: flex;
    flex-direction: column;
    overflow: hidden;
    background-color: #dfe3eb;
    color: #000;
    font-family: "Liberation Sans", Arial, sans-serif;
    font-size: 12px;
}
button, input, select {
    font: inherit;
    color: inherit;
    margin: 0;
    padding: 0;
    border: none;
    background: none;
}
svg {
    display: block;
    flex: none;
}
.defs {
    position: absolute;
}
.back-window {
    height: 96px;
    flex: none;
    overflow: hidden;
}
.main-window {
    flex: 1;
    min-height: 0;
    display: flex;
    flex-direction: column;
}

/* title bar */
.titlebar {
    height: 22px;
    flex: none;
    display: flex;
    align-items: center;
    padding: 0 3px 0 0;
    border-bottom: 1px solid #15121a;
    background:
        linear-gradient(to bottom, transparent 19px, #a8a8a8 20px),
        radial-gradient(ellipse 26px 14px at 557px 21px, #77715c, transparent),
        radial-gradient(ellipse 26px 14px at 632px 21px, #77715c, transparent),
        linear-gradient(100deg, #777 0, #8b8b8b 340px, #222 395px, #151515 470px, #4a4a4a 510px, #555 560px, #333 640px, #151515 700px, #333 850px, #161616 990px, #141414 1110px, #282828 1150px, #555 1250px, #777 100%);
}
.app-icon {
    width: 16px;
    height: 16px;
    margin-right: 5px;
}
.title-text {
    flex: 1;
    font-family: "Open Sans", "Noto Sans", sans-serif;
    font-size: 12px;
    line-height: 20px;
    white-space: pre;
    text-shadow: 0 0 6px #aaa, 0 0 8px #999;
}
.win-buttons {
    align-self: flex-start;
    display: flex;
    height: 18px;
    border: 1px solid #ccc;
    border-top: none;
    border-radius: 0 0 5px 5px;
    overflow: hidden;
}
.win-buttons button {
    width: 27px;
    display: flex;
    align-items: center;
    justify-content: center;
    border-right: 1px solid #bbb;
    background: linear-gradient(#aaa, #888 50%, #444 50%, #777);
}
.win-buttons .close {
    width: 48px;
    border-right: none;
    background: linear-gradient(#d8968a, #c86858 50%, #a82810 50%, #d05838);
}

/* menu */
.menubar {
    height: 20px;
    flex: none;
    display: flex;
    gap: 12px;
    padding-left: 7px;
    border-bottom: 1px solid #b0b6cc;
    background: linear-gradient(#fff, #eaeef8 35%, #d5dbee 36%, #e1e6f6);
    font-family: "Open Sans", "Noto Sans", sans-serif;
    line-height: 19px;
}
.menubar a {
    color: #000;
    text-decoration: none;
}

/* command history */
.console {
    display: flex;
    flex: none;
    padding: 3px 1px 0 0;
}
.grip {
    width: 7px;
    flex: none;
    background: linear-gradient(to right, transparent 3px, #b4bccc 3px, #b4bccc 4px, transparent 4px, transparent 5px, #b4bccc 5px, #b4bccc 6px, transparent 6px);
}
.console-text {
    flex: 1;
    padding: 1px 0 3px 1px;
    background-color: #fff;
    overflow: hidden;
}
.console-text p {
    margin: 0;
    line-height: 15px;
    white-space: pre;
}
.console-main {
    flex: 1;
    min-width: 0;
}
.console-history {
    display: flex;
    border-bottom: 1px solid #9ca4b8;
}
.scrollbar {
    width: 16px;
    flex: none;
    display: flex;
    flex-direction: column;
    background-color: #f0f0f0;
}
.track {
    flex: 1;
}
.thumb {
    height: 16px;
    display: flex;
    align-items: center;
    justify-content: center;
    border: 1px solid #989898;
    border-radius: 2px;
    background: linear-gradient(to right, #f6f6f6, #ddd 50%, #c4c4c8);
}
.tall {
    height: 23px;
}
.command-line {
    display: flex;
    align-items: center;
    height: 18px;
    padding: 0 0 2px 1px;
    background-color: #fff;
}
.command-line label {
    font-weight: bold;
}
.command-line input {
    flex: 1;
    outline: none;
}
.caret {
    width: 1px;
    height: 15px;
    margin-left: 2px;
    background-color: #000;
}
.spin button {
    display: flex;
    align-items: center;
    justify-content: center;
    width: 14px;
    height: 8px;
    margin: 1px;
    border: 1px solid #a8b0c0;
    background-color: #f4f6fa;
}

/* toolbar */
.toolbar {
    display: flex;
    flex: none;
    margin-top: 3px;
    padding-top: 4px;
    border-top: 1px solid #c0c6d2;
}
.toolbar-main {
    flex: 1;
    min-width: 0;
}
.tabs {
    display: flex;
    height: 15px;
    border-bottom: 1px solid #a6afc2;
}
.tab {
    position: relative;
    height: 14px;
    padding: 0 7px 0 9px;
    line-height: 14px;
    white-space: nowrap;
    font-size: 11px;
    border-top: 1px solid #a6afc2;
    border-right: 1px solid #a6afc2;
    border-radius: 0 4px 0 0;
    background-color: #d3daec;
    z-index: 0;
}
.tab::before {
    content: "";
    position: absolute;
    top: -1px;
    left: -5px;
    width: 10px;
    height: 15px;
    border-left: 1px solid #a6afc2;
    border-top: 1px solid #a6afc2;
    background-color: inherit;
    transform: skewX(-35deg);
    z-index: -1;
}
.tab.active {
    height: 15px;
    background-color: #f8f9fc;
    z-index: 1;
}
.tab:first-child::before {
    left: 0;
}
.cog {
    width: 16px;
    height: 16px;
    margin-left: auto;
}
.icons {
    display: flex;
    height: 38px;
    padding-top: 1px;
    background: linear-gradient(#f8f9fb, #e6e9ef);
}
.icons .tool:first-child {
    margin-left: -1px;
}
.tool {
    position: relative;
    width: 28px;
    height: 28px;
    flex: none;
}
.tool svg {
    width: 28px;
    height: 28px;
}
.fly::after {
    content: "";
    position: absolute;
    right: 0;
    bottom: 0;
    border-left: 6px solid transparent;
    border-bottom: 6px solid #666;
}
.help-mark {
    font: bold 18px "Liberation Serif", serif;
    fill: #fff;
    text-anchor: middle;
}
.small-mark {
    font: bold 9px "Liberation Sans", sans-serif;
    fill: #fff;
    text-anchor: middle;
}
.text-mark {
    font: bold 24px "Liberation Serif", serif;
    fill: #6c8cf4;
    stroke: #223;
    text-anchor: middle;
}

/* workspace */
.workspace {
    flex: 1;
    min-height: 0;
    display: flex;
}
.side-tools {
    width: 64px;
    flex: none;
    padding-top: 3px;
}
.h-grip {
    height: 3px;
    flex: none;
    border-top: 1px solid #b4bccc;
    border-bottom: 1px solid #b4bccc;
}
.side-tools .h-grip {
    margin: 0 6px 1px 3px;
}
.tool-grid {
    display: grid;
    grid-template-columns: 28px 28px;
    grid-auto-rows: 28px;
}
.more {
    padding-left: 14px;
    font-size: 18px;
    font-weight: bold;
    line-height: 24px;
}
.view-column {
    flex: 1;
    min-width: 0;
    display: flex;
    flex-direction: column;
}
.viewport {
    position: relative;
    flex: 1;
    min-height: 0;
    border: 1px solid #98a4b8;
    background-color: #a0a0a0;
    overflow: hidden;
}
.scene {
    width: 100%;
    height: 100%;
}
.body {
    fill: #2b150e;
}
.side {
    fill: #1f0e0a;
}
.light {
    fill: #57281b;
}
.edge {
    fill: none;
    stroke: #656012;
}
.axes {
    fill: #5c5c5c;
    font-size: 13px;
}
.axes path {
    fill: none;
    stroke: #6a6a6a;
}
.view-label {
    position: absolute;
    top: 0;
    left: 0;
    display: flex;
    align-items: center;
    gap: 8px;
    height: 18px;
    padding: 0 2px 0 8px;
    background-color: #8aa4c2;
    font-family: "Noto Sans", "Open Sans", sans-serif;
    font-size: 11px;
}
.view-tabs {
    display: flex;
    height: 25px;
    flex: none;
    font-family: "Noto Sans", "Open Sans", sans-serif;
    font-size: 11px;
}
.view-tabs button {
    position: relative;
    height: 21px;
    padding: 0 7px 0 11px;
    border-right: 1px solid #a6afc2;
    border-bottom: 1px solid #a6afc2;
    background: linear-gradient(55deg, #a6afc2 6px, #d3daec 7px);
    clip-path: polygon(0 0, 100% 0, 100% 100%, 8px 100%, 0 12px);
}
.view-tabs .active {
    background: linear-gradient(55deg, #a6afc2 6px, #fff 7px);
}

/* properties panel */
.panel {
    width: 423px;
    flex: none;
    display: flex;
    flex-direction: column;
    padding: 3px 0 6px 7px;
}
.panel-tabs {
    position: relative;
    display: flex;
    flex: none;
    height: 22px;
    margin-top: 2px;
}
.panel-tabs button {
    position: relative;
    display: flex;
    align-items: center;
    gap: 2px;
    height: 21px;
    padding: 0 8px 0 4px;
    font-size: 11px;
    border: 1px solid #a6afc2;
    border-right: none;
    border-bottom: none;
    border-radius: 3px 0 0 0;
    background-color: #d3daec;
    z-index: 0;
}
.panel-tabs button::after {
    content: "";
    position: absolute;
    top: -1px;
    right: -3px;
    width: 16px;
    height: 22px;
    border-top: 1px solid #a6afc2;
    border-right: 1px solid #a6afc2;
    background-color: inherit;
    transform: skewX(40deg);
    z-index: -1;
}
.panel-tabs .active {
    height: 23px;
    background-color: #f7f8fb;
    z-index: 1;
}
.panel-tabs button svg {
    width: 16px;
    height: 16px;
}
.panel-tabs .cog {
    margin-top: 4px;
}
.panel-body {
    flex: 1;
    min-height: 0;
    padding: 6px 6px 0 3px;
    border: 1px solid #a6afc2;
    background-color: #f7f8fb;
}
table {
    width: 100%;
    table-layout: fixed;
    border-spacing: 0;
    border: 1px solid #dfe3eb;
    font-size: 11px;
}
.gutter {
    width: 8px;
}
.names {
    width: 193px;
}
td, th {
    height: 19px;
    padding: 0;
    border-bottom: 1px solid #dfe3eb;
    background-color: #fff;
    font-weight: normal;
    text-align: left;
    line-height: 16px;
}
th {
    padding-left: 4px;
}
.group th {
    height: 23px;
    padding-left: 3px;
    background-color: #f7f8fb;
}
tr td:first-child {
    background-color: #f7f8fb;
}
td:last-child {
    border-left: 1px solid #dfe3eb;
}
td input[type="text"] {
    display: block;
    width: 100%;
    height: 18px;
    padding-left: 4px;
}
.off {
    color: #777;
}
.off td:last-child {
    background-color: #dfe3eb;
}
.drop, .file {
    display: flex;
    align-items: center;
    height: 18px;
    padding-left: 3px;
}
.drop select {
    flex: 1;
    height: 18px;
    appearance: none;
}
.drop-arrow {
    display: flex;
    align-items: center;
    justify-content: center;
    width: 18px;
    height: 18px;
    border-left: 1px solid #666;
    border-top: 1px solid #666;
    background-color: #e8e8e8;
    pointer-events: none;
}
.file {
    justify-content: space-between;
    padding-left: 2px;
}
.place, .browse {
    display: block;
    height: 17px;
    border: 1px solid #707070;
    border-radius: 3px;
    background: linear-gradient(#f4f4f4, #ebebeb 50%, #d8d8d8 50%, #cfcfcf);
    line-height: 14px;
}
.place {
    width: calc(100% - 1px);
    margin-left: 1px;
}
.browse {
    width: 17px;
}
td input[type="checkbox"] {
    display: block;
    appearance: none;
    width: 13px;
    height: 13px;
    margin-left: 4px;
    border: 1px solid #8a8f96;
    background: linear-gradient(135deg, #cfd5de, #fff);
}
td input[type="checkbox"]:checked::before {
    content: "";
    display: block;
    width: 4px;
    height: 8px;
    margin-left: 4px;
    border-right: 2px solid #4258a0;
    border-bottom: 2px solid #4258a0;
    transform: rotate(35deg);
}
```
